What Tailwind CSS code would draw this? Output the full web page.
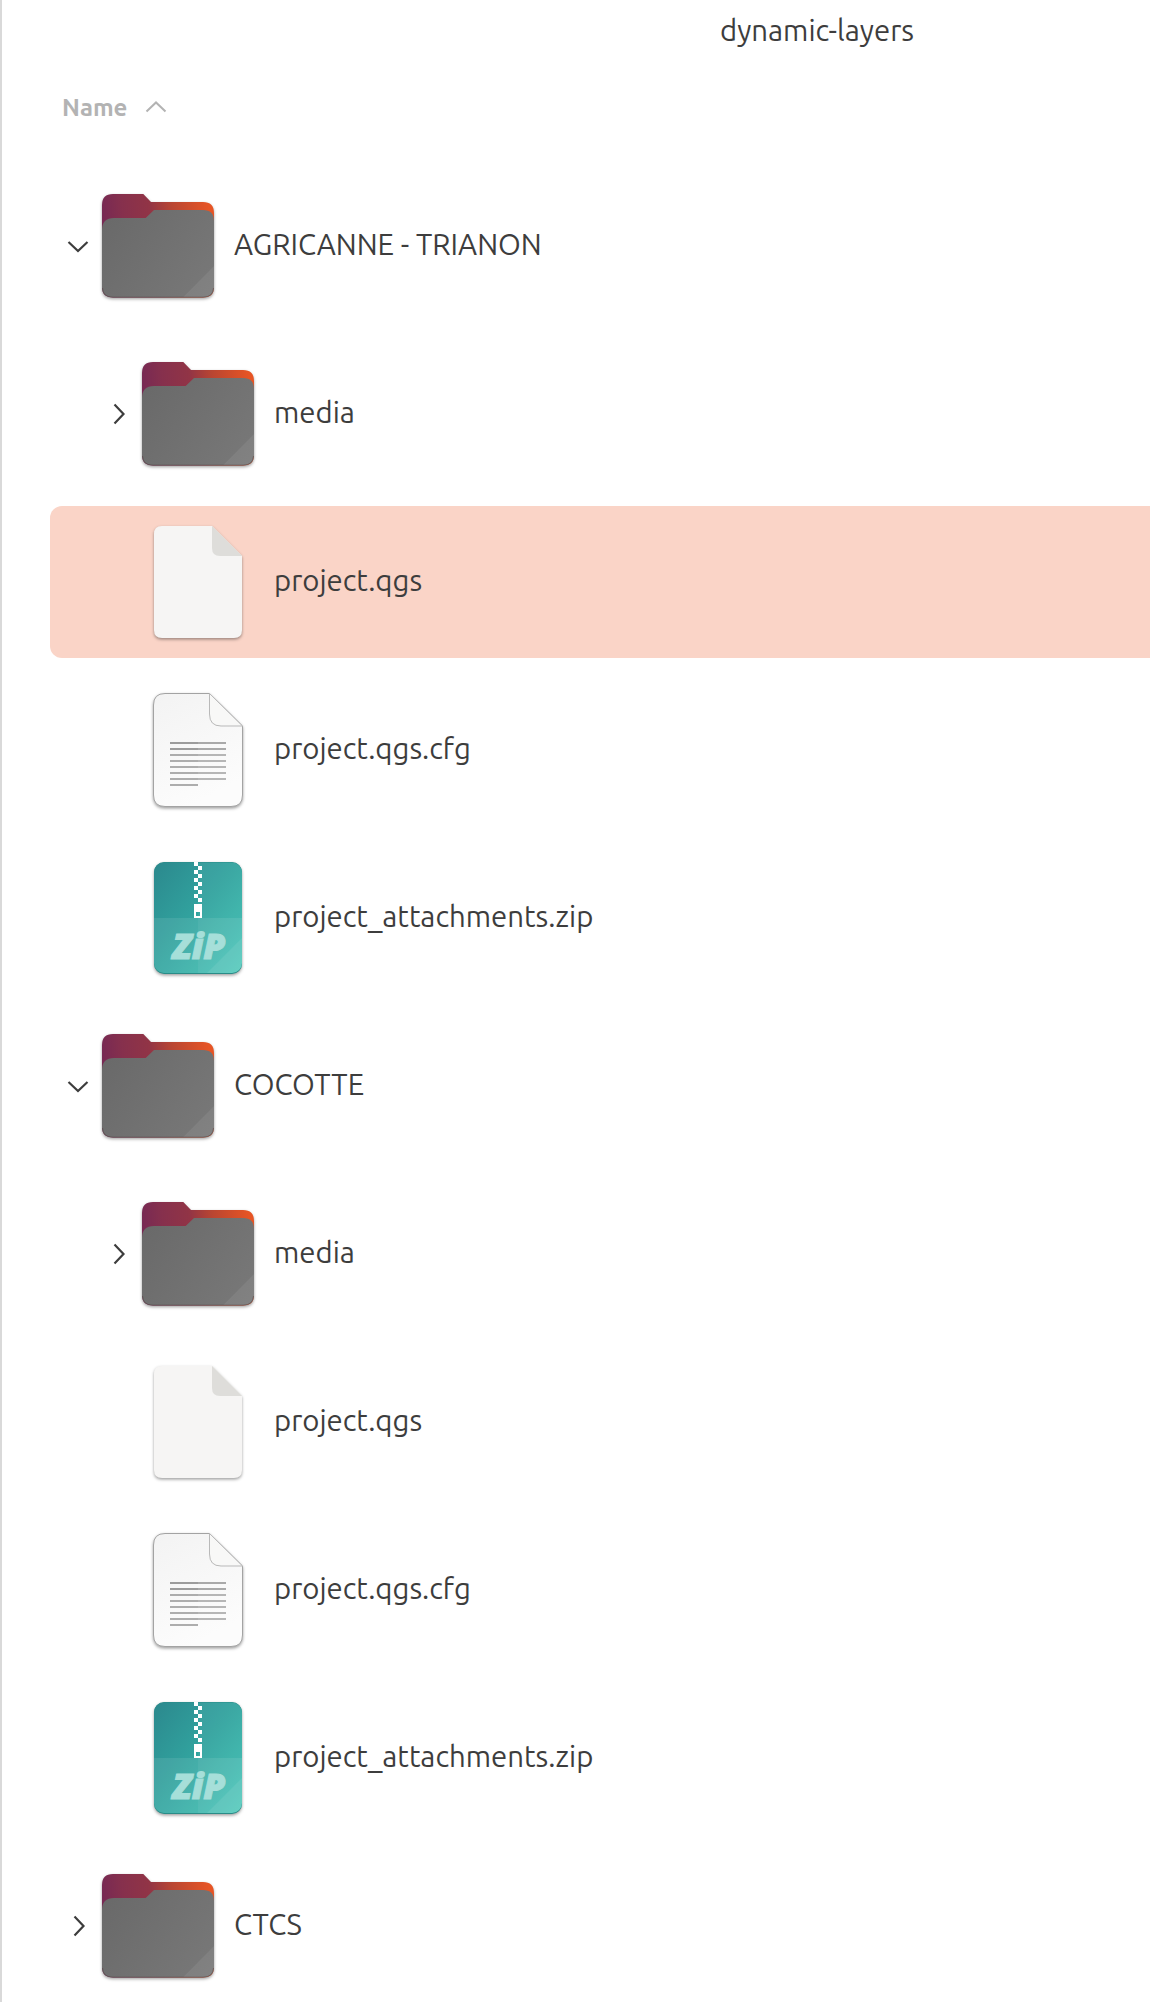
<!DOCTYPE html>
<html lang="en">
<head>
<meta charset="utf-8">
<title>dynamic-layers</title>
<script src="https://cdn.jsdelivr.net/npm/@tailwindcss/browser@4"></script>
</head>
<body class="bg-white">
<svg class="absolute h-0 w-0" aria-hidden="true">
  <defs>
    <linearGradient id="back" x1="8" y1="30" x2="120" y2="18" gradientUnits="userSpaceOnUse">
      <stop offset="0" stop-color="#772953"/><stop offset=".18" stop-color="#86304d"/><stop offset=".42" stop-color="#913446"/><stop offset=".62" stop-color="#b84532"/><stop offset=".95" stop-color="#e65424"/>
    </linearGradient>
    <linearGradient id="front" x1="8" y1="36" x2="120" y2="116" gradientUnits="userSpaceOnUse">
      <stop offset="0" stop-color="#696969"/><stop offset="1" stop-color="#797979"/>
    </linearGradient>
    <linearGradient id="paper" x1="0" y1="0" x2="0.4" y2="1">
      <stop offset="0" stop-color="#f3f3f3"/><stop offset="1" stop-color="#fcfcfc"/>
    </linearGradient>
    <linearGradient id="teal" x1="0" y1="0" x2="1" y2="1">
      <stop offset="0" stop-color="#2b888d"/><stop offset=".5" stop-color="#32a5a0"/><stop offset="1" stop-color="#3fc4b5"/>
    </linearGradient>
    <clipPath id="zipclip"><rect x="20" y="8.500" width="88" height="110.500" rx="10"/></clipPath>
    <filter id="shadow" x="-10%" y="-10%" width="120%" height="125%" color-interpolation-filters="sRGB">
      <feDropShadow dx="0" dy="1.500" stdDeviation="1.700" flood-color="#000" flood-opacity=".38"/>
    </filter>
  </defs>
  <symbol id="folder" viewBox="0 0 128 128">
    <g filter="url(#shadow)">
      <path fill="url(#back)" d="M19 12H49.300L57 20H109Q120 20 120 31V105Q120 115.500 109 115.500H19Q8 115.500 8 105V23Q8 12 19 12Z"/>
    </g>
    <path fill="url(#front)" d="M20 36H51.700L60 28H109Q120 28 120 39V105Q120 115.200 109 115.200H19Q8 115.200 8 105V48Q8 36 20 36Z"/>
    <path fill="#fff" fill-opacity=".07" d="M120 84V105Q120 115 109 115H89.300Z"/>
    <path fill="none" stroke="#4d3b3b" stroke-opacity=".6" stroke-width=".8" d="M8.500 106Q9 115.200 19 115.200H109Q119 115.200 119.500 106"/>
  </symbol>
  <symbol id="blank" viewBox="0 0 128 128">
    <g filter="url(#shadow)"><path fill="#f6f5f4" d="M28 8H78L108 38V112Q108 120 100 120H28Q20 120 20 112V16Q20 8 28 8Z"/></g>
    <path fill="#deddda" d="M78 8L108 38H86Q78 38 78 30Z"/>
  </symbol>
  <symbol id="text" viewBox="0 0 128 128">
    <g filter="url(#shadow)"><path fill="url(#paper)" stroke="#a3a3a3" d="M31 7.500H75.500L108.500 40V109Q108.500 120.500 97 120.500H31Q19.500 120.500 19.500 109V19Q19.500 7.500 31 7.500Z"/></g>
    <path fill="#f8f8f7" stroke="#b9b9b9" d="M75.500 7.500L108.500 40H87Q75.500 40 75.500 28Z"/>
    <path fill="none" stroke="#a9a9a9" stroke-width="2" d="M36 57H92M36 63H92"/>
    <path fill="none" stroke="#b6b6b6" stroke-width="2" d="M36 69H92M36 75H92M36 81H92M36 87H92M36 93H92"/>
    <path fill="none" stroke="#9c9c9c" stroke-width="2" d="M36 57H64M36 63H64"/>
    <path fill="none" stroke="#adadad" stroke-width="2" d="M36 69H64M36 75H64M36 81H64M36 87H64M36 93H64M36 99H64"/>
  </symbol>
  <symbol id="down" viewBox="0 0 32 32"><path d="M6.500 12L16 21L25.500 12" fill="none" stroke="currentColor" stroke-width="2.200"/></symbol>
  <symbol id="right" viewBox="0 0 32 32"><path d="M12.500 6.500L21.500 16L12.500 25.500" fill="none" stroke="currentColor" stroke-width="2.200"/></symbol>
</svg>

<div class="h-[2002px] overflow-hidden border-l-2 border-[#d9d9d9] text-[29.333px] text-[#3d3d3d] font-[Ubuntu,'Noto_Sans',sans-serif]">
  <header class="flex h-[62px] items-center pl-[718px]"><h1>dynamic-layers</h1></header>
  <div class="flex h-[92px] items-center pl-[60px] text-[#b3b3b3]">
    <span class="w-[78px] text-[24px] font-bold">Name</span>
    <svg class="mb-[3px] h-8 w-8 shrink-0" viewBox="0 0 32 32"><path d="M6.500 20.500L16 11.500L25.500 20.500" fill="none" stroke="currentColor" stroke-width="2"/></svg>
  </div>
  <ul id="tree" class="flex flex-col gap-4 pl-12 pt-4"></ul>
</div>
<script>
const rows = [
  [0, 'folder', 'AGRICANNE - TRIANON', 'down'],
  [1, 'folder', 'media', 'right'],
  [1, 'blank', 'project.qgs', '', true],
  [1, 'text', 'project.qgs.cfg'],
  [1, 'zip', 'project_attachments.zip'],
  [0, 'folder', 'COCOTTE', 'down'],
  [1, 'folder', 'media', 'right'],
  [1, 'blank', 'project.qgs'],
  [1, 'text', 'project.qgs.cfg'],
  [1, 'zip', 'project_attachments.zip'],
  [0, 'folder', 'CTCS', 'right'],
];
const zip = `
  <g filter="url(#shadow)"><rect x="20" y="8" width="88" height="112" rx="10" fill="#2a8c88"/></g>
  <g clip-path="url(#zipclip)">
    <rect x="20" y="8" width="88" height="112" fill="url(#teal)"/>
    <path fill="#fff" fill-opacity=".05" d="M64 8H108V120H64Z"/>
    <path fill="#fff" fill-opacity=".09" d="M20 64H108V120H20Z"/>
    <path fill="#fff" fill-opacity=".08" d="M108 84V120H72Z"/>
  </g>
  <path fill="#fff" shape-rendering="crispEdges" d="M60 8h4v4h-4zM64 12h4v4h-4zM60 16h4v4h-4zM64 20h4v4h-4zM60 24h4v4h-4zM64 28h4v4h-4zM60 32h4v4h-4zM64 36h4v4h-4zM60 40h4v4h-4zM64 44h4v4h-4z"/>
  <path fill="#fff" fill-rule="evenodd" shape-rendering="crispEdges" d="M60 50h8v14h-8zM62 58h4v4h-4z"/>
  <text x="38.500" y="105" textLength="53" lengthAdjust="spacingAndGlyphs" class="fill-[#a6dfd9] stroke-[#a6dfd9] stroke-1 text-[35px] font-extrabold italic font-['Open_Sans',sans-serif]">ZiP</text>`;
document.getElementById('tree').innerHTML = rows.map(([level, icon, name, arrow, selected]) => `
  <li class="flex h-[152px] shrink-0 items-center rounded-l-xl ${level ? 'pl-[52px]' : 'pl-3'} ${selected ? 'bg-[#fad4c7]' : ''}">
    <svg class="h-8 w-8">${arrow ? `<use href="#${arrow}"/>` : ''}</svg>
    <svg class="h-32 w-32" viewBox="0 0 128 128">${icon === 'zip' ? zip : `<use href="#${icon}"/>`}</svg>
    <span class="ml-3 -mt-0.5">${name}</span>
  </li>`).join('');
</script>
</body>
</html>
